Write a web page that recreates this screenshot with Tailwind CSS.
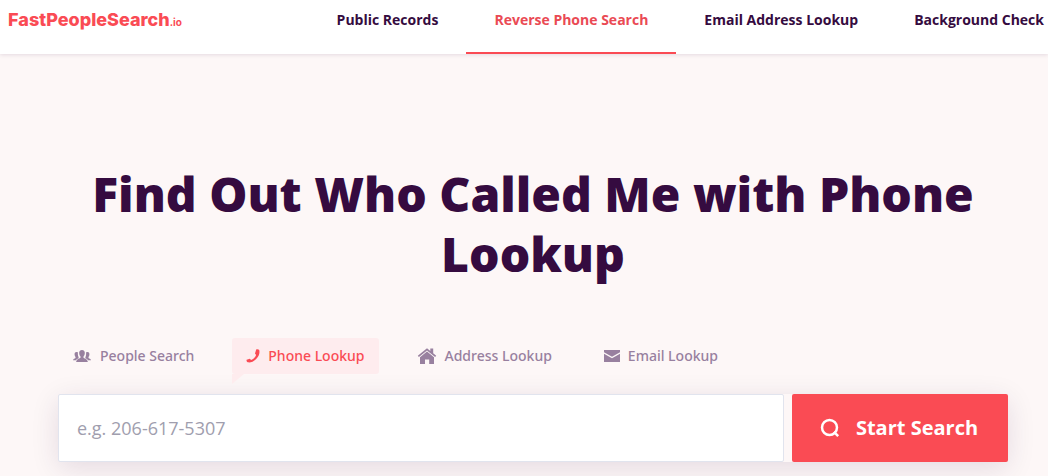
<!DOCTYPE html>
<html lang="en">
<head>
<meta charset="utf-8">
<meta name="viewport" content="width=device-width, initial-scale=1">
<title>FastPeopleSearch.io</title>
<script src="https://cdn.jsdelivr.net/npm/@tailwindcss/browser@4"></script>
</head>
<body class="flex min-h-screen flex-col overflow-hidden bg-[#fdf7f7] font-['Open_Sans',sans-serif] text-[#350b40]">
<header class="relative flex h-[54px] shrink-0 items-start justify-between bg-white pl-2 shadow-[0_1px_4px_rgba(53,11,64,0.12)]">
  <a href="#" class="pt-2 font-['Inter',sans-serif] text-lg leading-6 font-extrabold whitespace-nowrap text-[#fa4b54]">FastPeopleSearch<span class="text-[10px] font-bold">.io</span></a>
  <nav class="-mr-6 flex h-full shrink-0 text-sm font-bold whitespace-nowrap">
    <a href="#" class="px-7 pt-2 leading-6">Public Records</a>
    <a href="#" aria-current="page" class="border-b-2 border-[#fa4b54] px-7 pt-2 leading-6 text-[#ea4a54]">Reverse Phone Search</a>
    <a href="#" class="px-7 pt-2 leading-6">Email Address Lookup</a>
    <a href="#" class="px-7 pt-2 leading-6">Background Check</a>
  </nav>
</header>
<main class="pt-[110px] pr-10 pl-[58px]">
  <h1 class="text-center text-5xl leading-[60px] font-extrabold">Find Out Who Called Me with Phone Lookup</h1>
  <div class="mt-[54px] flex gap-6 font-['Noto_Sans',sans-serif] text-sm font-medium text-[#98809f]">
    <button type="button" class="flex h-9 items-center gap-2 px-3.5">
      <svg class="h-[18px] w-5" viewBox="0 0 20 18" fill="currentColor" aria-hidden="true"><path d="M10 3c-2 0-3 1.300-2.800 3.200.1 1.500.6 2.500 1.300 3.200v1.400c-.5.900-4.300 1.200-4.300 4.200h11.600c0-3-3.800-3.300-4.300-4.200V9.400c.7-.7 1.200-1.700 1.300-3.200C13 4.300 12 3 10 3z"/><path d="M4.600 5C2.900 5 2.400 6.300 2.600 7.700c.1 1 .4 1.700.9 2.200v1C2.900 11.600 1 11.700 1 13.300h3c.5-1 1.600-1.700 3.200-2.200l-.8-.7V9.600c-.4-1-.6-2.300-.5-4.200-.3-.3-.7-.4-1.300-.4zM15.400 5c1.700 0 2.200 1.300 2 2.700-.1 1-.4 1.700-.9 2.200v1c.6.700 2.500.8 2.500 2.400h-3c-.5-1-1.600-1.700-3.200-2.200l.8-.7V9.600c.4-1 .6-2.300.5-4.200.3-.3.700-.4 1.300-.4z"/></svg>People Search</button>
    <button type="button" aria-pressed="true" class="relative flex h-9 items-center gap-2 rounded-[3px] bg-[#feecee] px-3.5 text-[#fa4b54]">
      <svg class="h-4 w-3.5" viewBox="0 0 14 16" fill="currentColor" aria-hidden="true"><path d="M10.200 1.500c1-.5 2.500-.2 3 .6.800 2.600-.3 5.900-2.600 8.400-2.500 2.800-6.200 4.500-8.800 3.800C.8 14 .3 12.600.6 11.700l3.200-.9 1.300 1.200c2.200-.8 4.200-2.900 5-5.100L9 5.500z"/></svg>Phone Lookup
      <span class="absolute top-full left-0 h-0 w-0 border-t-[10px] border-r-[12px] border-t-[#feecee] border-r-transparent" aria-hidden="true"></span>
    </button>
    <button type="button" class="flex h-9 items-center gap-2 px-3.5">
      <svg class="h-[18px] w-5" viewBox="0 0 20 18" fill="currentColor" aria-hidden="true"><path d="M10 1.200l3.300 2.700V1.500h2.900v4.700l3 2.500-1.100 1.400L10 3.500l-8.100 6.600L.8 8.700z"/><path d="M10 4.500l7 5.800V17h-4.800v-4.500H8V17H3v-6.700z"/></svg>Address Lookup</button>
    <button type="button" class="flex h-9 items-center gap-2 px-3.5">
      <svg class="h-4 w-4" viewBox="0 0 16 16" fill="currentColor" aria-hidden="true"><path d="M0 2h16v2.200L8 8.700 0 4.200z"/><path d="M0 5.700l8 4.500 8-4.500V14H0z"/></svg>Email Lookup</button>
  </div>
  <form class="mt-5 flex gap-2 rounded-sm shadow-[0_6px_28px_rgba(53,11,64,0.12)]">
    <input type="tel" aria-label="Phone number" placeholder="e.g. 206-617-5307" class="h-[68px] min-w-0 flex-1 rounded-xs border border-[#e1e4ee] bg-white px-[18px] text-lg outline-none placeholder:text-[#a09eae]">
    <button type="submit" class="flex h-[68px] w-[216px] shrink-0 items-center justify-center gap-4 rounded-xs bg-[#fa4b54] pr-0.5 text-xl font-bold text-white"><svg class="h-5 w-5" viewBox="0 0 20 20" fill="none" stroke="currentColor" stroke-width="2.500" aria-hidden="true"><circle cx="9.500" cy="9.500" r="7.500"/><path d="M13.800 13.800l4.400 4.400"/></svg>Start Search</button>
  </form>
</main>
</body>
</html>
